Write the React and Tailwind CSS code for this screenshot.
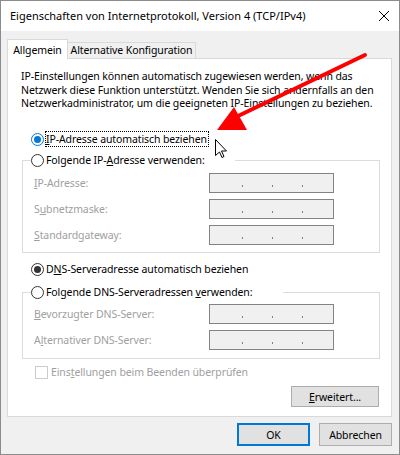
import React from "react";

const Radio = ({ checked, hover }) => (
  <span
    className={
      hover
        ? "w-[13px] h-[13px] rounded-full border border-[#0078d7] bg-white flex items-center justify-center shrink-0"
        : "w-[13px] h-[13px] rounded-full border border-[#333333] bg-white flex items-center justify-center shrink-0"
    }
  >
    {checked && (
      <span
        className={hover ? "w-[7px] h-[7px] rounded-full bg-[#0078d7]" : "w-[7px] h-[7px] rounded-full bg-[#333333]"}
      />
    )}
  </span>
);

const IpBox = () => (
  <div className="w-[125px] h-[20px] border border-[#838383] bg-[#f0f0f0] flex items-start pt-[11px]">
    <span className="ml-[32px] w-px h-[2px] bg-[#7c7ca0]" />
    <span className="ml-[29px] w-px h-[2px] bg-[#7c7ca0]" />
    <span className="ml-[29px] w-px h-[2px] bg-[#7c7ca0]" />
  </div>
);

const IpRow = ({ children }) => (
  <div className="flex items-center h-[20px]">
    <div className="w-[186px] pl-[11px] text-[#a0a0a0]">{children}</div>
    <IpBox />
  </div>
);

export default function App() {
  return (
    <div className="relative w-[400px] h-[455px] font-['Noto_Sans',sans-serif] text-[10.5px] tracking-[-0.1px] text-black leading-[16px] whitespace-nowrap">
      <div className="w-[400px] h-[455px] border border-[#8c8c8c] bg-[#f0f0f0] flex flex-col">
        {/* TITLE */}
        <div className="h-[30px] bg-white flex items-center justify-between pl-[9px] pr-[10px]">
          <p className="text-[11px] tracking-normal">Eigenschaften von Internetprotokoll, Version 4 (TCP/IPv4)</p>
          <svg width="10" height="10" viewBox="0 0 10 10">
            <path d="M0 0 L10 10 M10 0 L0 10" stroke="#000" strokeWidth="1" />
          </svg>
        </div>

        {/* TABS */}
        <div className="flex items-end h-[19px] mt-[8px] ml-[6px]">
          <div className="relative z-10 w-[61px] h-[20px] -mb-px border-t border-l border-r border-[#d9d9d9] bg-white text-center pt-[2px]">
            Allgemein
          </div>
          <div className="w-[128px] h-[16px] border-t border-r border-[#d9d9d9] bg-[#f0f0f0] text-center leading-[15px]">
            Alternative Konfiguration
          </div>
        </div>

        {/* PANEL */}
        <div className="ml-[6px] w-[385px] h-[359px] border border-[#d9d9d9] bg-white pl-[13px] pr-[12px] flex flex-col">
          <p className="mt-[11px] h-[41px] leading-[13.5px]">
            IP-Einstellungen können automatisch zugewiesen werden, wenn das
            <br />
            Netzwerk diese Funktion unterstützt. Wenden Sie sich andernfalls an den
            <br />
            Netzwerkadministrator, um die geeigneten IP-Einstellungen zu beziehen.
          </p>

          <div className="mt-[20px] h-[16px] flex items-center ml-[10px]">
            <Radio checked hover />
            <span className="ml-px h-[16px] border border-dotted border-black leading-[14px] pr-px">
              <u>I</u>P-Adresse automatisch beziehen
            </span>
          </div>

          <fieldset className="mt-[5px] ml-px w-[358px] border border-[#dcdcdc] pb-[7px]">
            <legend className="ml-[8px] w-[204px] h-[16px] flex items-center">
              <Radio />
              <span className="ml-[2px]">
                Folgende IP-<u>A</u>dresse verwenden:
              </span>
            </legend>
            <div className="mt-[5px] flex flex-col gap-[6px]">
              <IpRow>
                <u>I</u>P-Adresse:
              </IpRow>
              <IpRow>
                S<u>u</u>bnetzmaske:
              </IpRow>
              <IpRow>
                <u>S</u>tandardgateway:
              </IpRow>
            </div>
          </fieldset>

          <div className="mt-[8px] h-[16px] flex items-center ml-[10px]">
            <Radio checked />
            <span className="ml-[2px]">
              D<u>N</u>S-Serveradresse automatisch beziehen
            </span>
          </div>

          <fieldset className="mt-[7px] ml-px w-[358px] border border-[#dcdcdc] pb-[8px]">
            <legend className="ml-[8px] w-[252px] h-[16px] flex items-center">
              <Radio />
              <span className="ml-[2px]">
                Folgende DNS-Serveradressen <u>v</u>erwenden:
              </span>
            </legend>
            <div className="mt-[4px] flex flex-col gap-[6px]">
              <IpRow>
                <u>B</u>evorzugter DNS-Server:
              </IpRow>
              <IpRow>
                A<u>l</u>ternativer DNS-Server:
              </IpRow>
            </div>
          </fieldset>

          <div className="mt-[5px] h-[16px] flex items-center ml-[14px]">
            <span className="w-[13px] h-[13px] border border-[#cccccc] bg-white" />
            <span className="ml-[3px] text-[#a0a0a0]">
              Eins<u>t</u>ellungen beim Beenden überprüfen
            </span>
          </div>

          <div className="mt-[6px] flex justify-end">
            <button className="w-[88px] h-[21px] border border-[#adadad] bg-[#e1e1e1] leading-[18px]">
              <u>E</u>rweitert...
            </button>
          </div>
        </div>

        {/* BUTTONS */}
        <div className="mt-[6px] flex justify-end gap-[9px] pr-[7px]">
          <button className="w-[73px] h-[23px] border-2 border-[#0078d7] bg-[#e1e1e1]">OK</button>
          <button className="w-[73px] h-[23px] border border-[#adadad] bg-[#e1e1e1]">Abbrechen</button>
        </div>
      </div>

      {/* annotation + cursor */}
      <svg className="absolute left-0 top-0 pointer-events-none" width="400" height="455" viewBox="0 0 400 455">
        <line x1="365" y1="55" x2="236" y2="117" stroke="#ff0000" strokeWidth="4" strokeLinecap="round" />
        <polygon points="217,130 247,130 234,107" fill="#ff0000" />
        <path
          d="M215.5 139.5 L215.5 155.5 L219.5 152 L222 157.5 L224 156.5 L221.5 151 L226.5 151 Z"
          fill="#fff"
          stroke="#000"
          strokeWidth="1"
          strokeLinejoin="round"
        />
      </svg>
    </div>
  );
}
